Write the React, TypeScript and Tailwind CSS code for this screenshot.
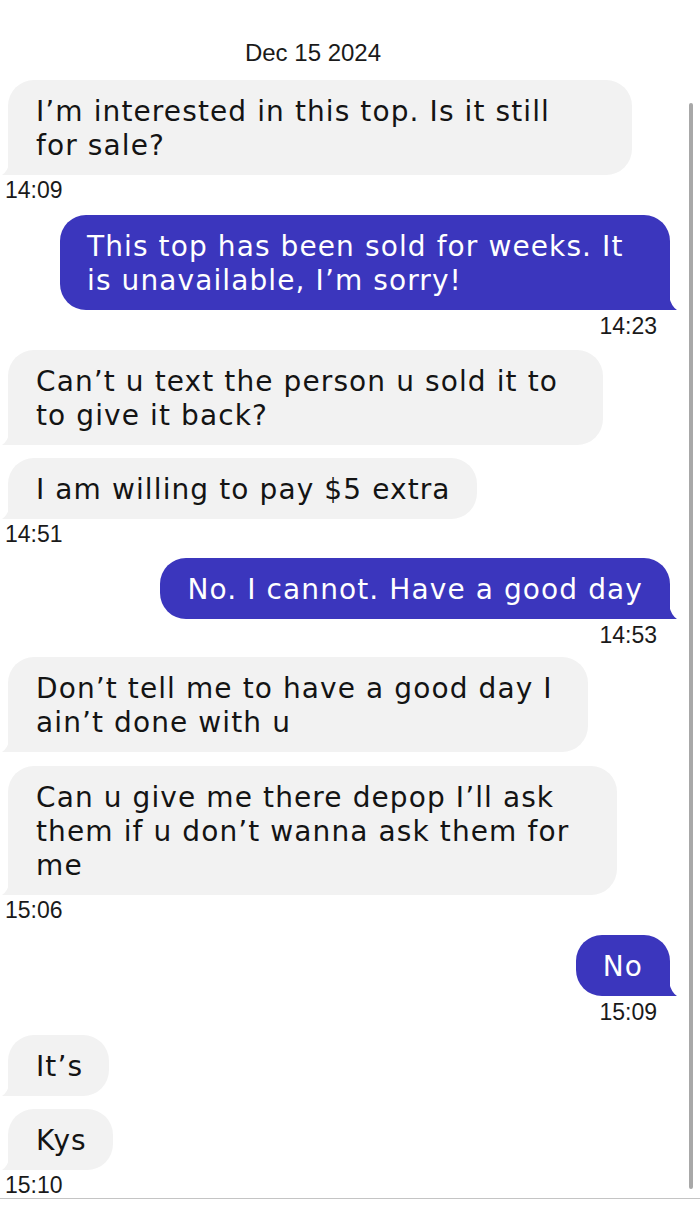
import React from "react";

type Msg = {
  from: "me" | "them";
  lines: string[];
  width?: number;
  time?: string;
  mt: number;
};

const msgs: Msg[] = [
  { from: "them", lines: ["I’m interested in this top. Is it still", "for sale?"], width: 624, time: "14:09", mt: 13 },
  { from: "me", lines: ["This top has been sold for weeks. It", "is unavailable, I’m sorry!"], width: 610, time: "14:23", mt: 14 },
  { from: "them", lines: ["Can’t u text the person u sold it to", "to give it back?"], width: 595, mt: 13 },
  { from: "them", lines: ["I am willing to pay $5 extra"], time: "14:51", mt: 13 },
  { from: "me", lines: ["No. I cannot. Have a good day"], time: "14:53", mt: 13 },
  { from: "them", lines: ["Don’t tell me to have a good day I", "ain’t done with u"], width: 580, mt: 11 },
  { from: "them", lines: ["Can u give me there depop I’ll ask", "them if u don’t wanna ask them for", "me"], width: 609, time: "15:06", mt: 14 },
  { from: "me", lines: ["No"], time: "15:09", mt: 14 },
  { from: "them", lines: ["It’s"], mt: 12 },
  { from: "them", lines: ["Kys"], time: "15:10", mt: 13 },
];

const Tail = ({ side }: { side: "left" | "right" }) =>
  side === "left" ? (
    <svg className="absolute bottom-0 -left-[6px]" width="8" height="14" viewBox="0 0 8 14">
      <path d="M8 0 L8 14 L0 14 Q6 10 8 0 Z" fill="#f2f2f2" />
    </svg>
  ) : (
    <svg className="absolute bottom-0 -right-[7px]" width="8" height="14" viewBox="0 0 8 14">
      <path d="M0 0 L0 14 L8 14 Q2 10 0 0 Z" fill="#3b36bd" />
    </svg>
  );

const Bubble = ({ m }: { m: Msg }) => {
  const mine = m.from === "me";
  return (
    <div className={mine ? "flex flex-col items-end pr-[30px]" : "flex flex-col items-start"} style={{ marginTop: m.mt }}>
      <div
        className={
          mine
            ? "relative bg-[#3b36bd] text-white rounded-[26px] rounded-br-none pl-[27px] pr-[27px] pt-[15px] pb-[12px] text-[28px] leading-[34px] tracking-[1.1px]"
            : "relative ml-[8px] bg-[#f2f2f2] text-[#141414] rounded-[26px] rounded-bl-none pl-[28px] pr-[26px] pt-[15px] pb-[12px] text-[28px] leading-[34px] tracking-[1.1px]"
        }
        style={m.width ? { width: m.width } : undefined}
      >
        {m.lines.map((l, i) => (
          <div key={i} className="whitespace-nowrap">{l}</div>
        ))}
        <Tail side={mine ? "right" : "left"} />
      </div>
      {m.time && (
        <div
          className={
            mine
              ? "mt-[5px] mr-[13px] text-[23px] leading-[22px] text-[#1a1a1a] font-['Liberation_Sans',Arial,sans-serif]"
              : "mt-[4px] ml-[5px] text-[23px] leading-[22px] text-[#1a1a1a] font-['Liberation_Sans',Arial,sans-serif]"
          }
        >
          {m.time}
        </div>
      )}
    </div>
  );
};

export default function App() {
  return (
    <div className="relative w-[700px] h-[1213px] bg-white overflow-hidden font-['DejaVu_Sans',sans-serif]">
      <div className="flex flex-col">
        <div className="pt-[39px] pr-[74px] text-center text-[24px] leading-[28px] text-[#1a1a1a] font-['Liberation_Sans',Arial,sans-serif]">
          Dec 15 2024
        </div>
        {msgs.map((m, i) => (
          <Bubble key={i} m={m} />
        ))}
      </div>
      <div className="absolute right-[7px] top-[103px] w-[4px] h-[1086px] rounded-full bg-[#a8a8a8]" />
      <div className="absolute left-0 right-0 top-[1198px] h-[1px] bg-[#c4c4c4]" />
    </div>
  );
}
